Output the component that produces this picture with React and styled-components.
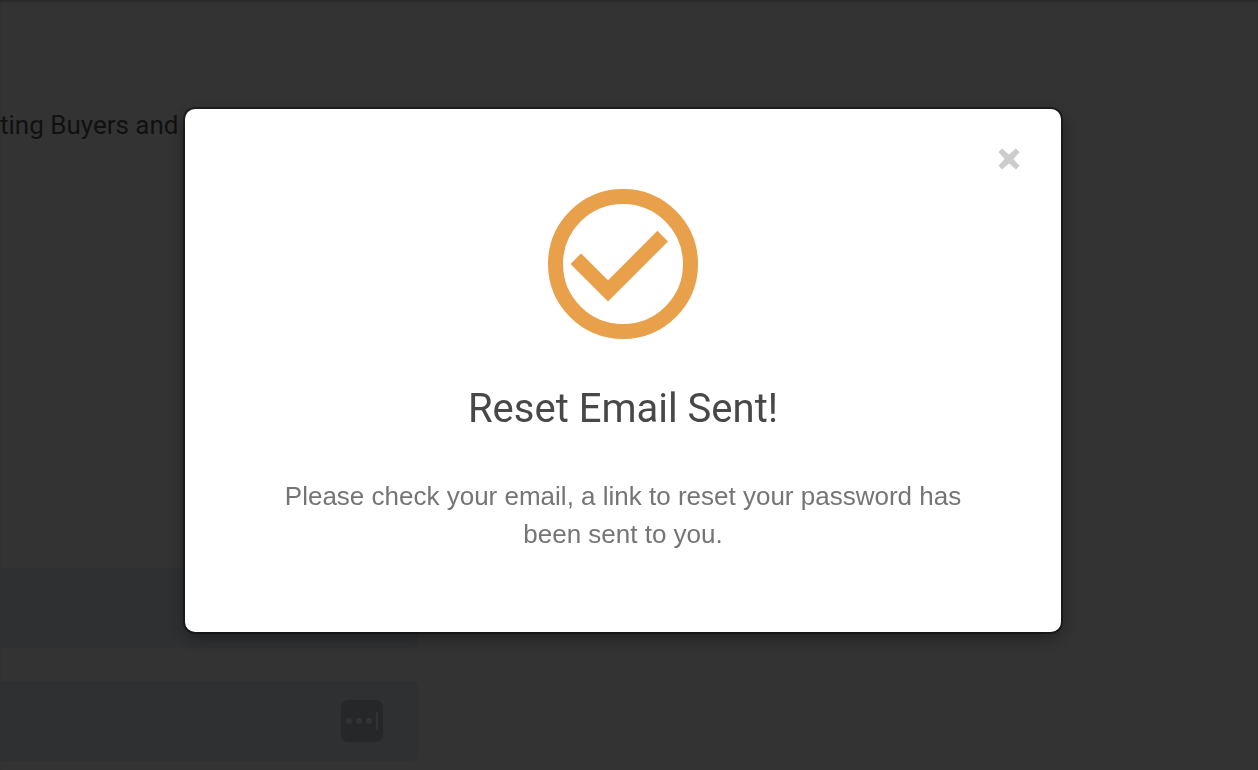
import React, { useState } from 'react';
import styled, { createGlobalStyle } from 'styled-components';

const GlobalStyle = createGlobalStyle`
    * {
        box-sizing: border-box;
    }
    body {
        margin: 0;
        background: #fff;
        font-family: "Liberation Sans", Arial, sans-serif;
    }
`;

const App = () => {
    const [open, setOpen] = useState(true);

    return (
        <>
            <GlobalStyle />
            <PageStyled>
                <Tagline>ting Buyers and</Tagline>
                <LoginForm>
                    <Field>
                        <input type="email" aria-label="Email" />
                    </Field>
                    <Field>
                        <input type="password" aria-label="Password" />
                        <FillButton type="button" aria-label="Fill password">
                            <svg width="42" height="42" viewBox="0 0 42 42" fill="currentColor">
                                <circle cx="8" cy="21" r="3" />
                                <circle cx="18" cy="21" r="3" />
                                <circle cx="28" cy="21" r="3" />
                                <rect x="35" y="12" width="2" height="18" />
                            </svg>
                        </FillButton>
                    </Field>
                </LoginForm>
            </PageStyled>
            {open && (
                <Overlay>
                    <Modal role="dialog" aria-modal="true" aria-labelledby="modal-title">
                        <CloseButton type="button" aria-label="Close" onClick={() => setOpen(false)}>
                            <svg width="22" height="22" viewBox="0 0 22 22" fill="currentColor">
                                <path d="M4.2 1 11 7.2 17.8 1 21 4.2 14.8 11 21 17.8 17.8 21 11 14.8 4.2 21 1 17.8 7.2 11 1 4.2z" stroke="currentColor" strokeWidth="1" strokeLinejoin="round" />
                            </svg>
                        </CloseButton>
                        <CheckIcon viewBox="2 2 20 20" aria-hidden="true">
                            <circle cx="12" cy="12" r="9" fill="none" stroke="currentColor" strokeWidth="2" />
                            <path d="M16.59 7.58 10 14.17l-3.59-3.58L5 12l5 5 8-8z" fill="currentColor" />
                        </CheckIcon>
                        <Title id="modal-title">Reset Email Sent!</Title>
                        <Message>
                            Please check your email, a link to reset your password has been sent to you.
                        </Message>
                    </Modal>
                </Overlay>
            )}
        </>
    )
};

const PageStyled = styled.main`
    display: flex;
    flex-direction: column;
    min-height: 100vh;
    padding-top: 106px;
    box-shadow: inset 0 2px 2px rgba(0, 0, 0, 0.2);
`;

const Tagline = styled.p`
    margin: 0;
    font-family: Roboto, sans-serif;
    font-size: 26px;
    line-height: 38px;
    color: #555;
`;

const LoginForm = styled.form`
    display: flex;
    flex-direction: column;
    gap: 33px;
    width: 100%;
    max-width: 418px;
    margin-top: 424px;
`;

const Field = styled.div`
    display: flex;
    align-items: center;
    height: 80px;
    padding-right: 35px;
    border-radius: 0 6px 6px 0;
    background: #e8f0f8;
    input {
        flex: 1;
        min-width: 0;
        height: 100%;
        border: 0;
        outline: none;
        background: transparent;
        font-size: 26px;
    }
`;

const FillButton = styled.button`
    display: flex;
    padding: 0;
    border: 0;
    border-radius: 7px;
    background: #bec1c8;
    color: #fff;
`;

const Overlay = styled.div`
    position: fixed;
    inset: 0;
    display: flex;
    align-items: flex-start;
    justify-content: center;
    padding: 109px 12px 0 0;
    background: rgba(0, 0, 0, 0.8);
`;

const Modal = styled.div`
    position: relative;
    display: flex;
    flex-direction: column;
    align-items: center;
    width: 100%;
    max-width: 876px;
    padding: 80px 80px 79px;
    border-radius: 10px;
    background: #fff;
    text-align: center;
    box-shadow: 0 0 0 2px rgba(0, 0, 0, 0.4), 0 6px 20px rgba(0, 0, 0, 0.4);
`;

const CloseButton = styled.button`
    position: absolute;
    top: 39px;
    right: 41px;
    display: flex;
    padding: 0;
    border: 0;
    background: none;
    color: #ccc;
    cursor: pointer;
`;

const CheckIcon = styled.svg`
    width: 150px;
    height: 150px;
    color: #e8a04a;
`;

const Title = styled.h2`
    margin: 48px 0 46px;
    font-family: Roboto, sans-serif;
    font-size: 40px;
    font-weight: 400;
    line-height: 44px;
    color: #484848;
`;

const Message = styled.p`
    margin: 0;
    font-size: 26px;
    line-height: 38px;
    color: #757575;
`;

export default App
